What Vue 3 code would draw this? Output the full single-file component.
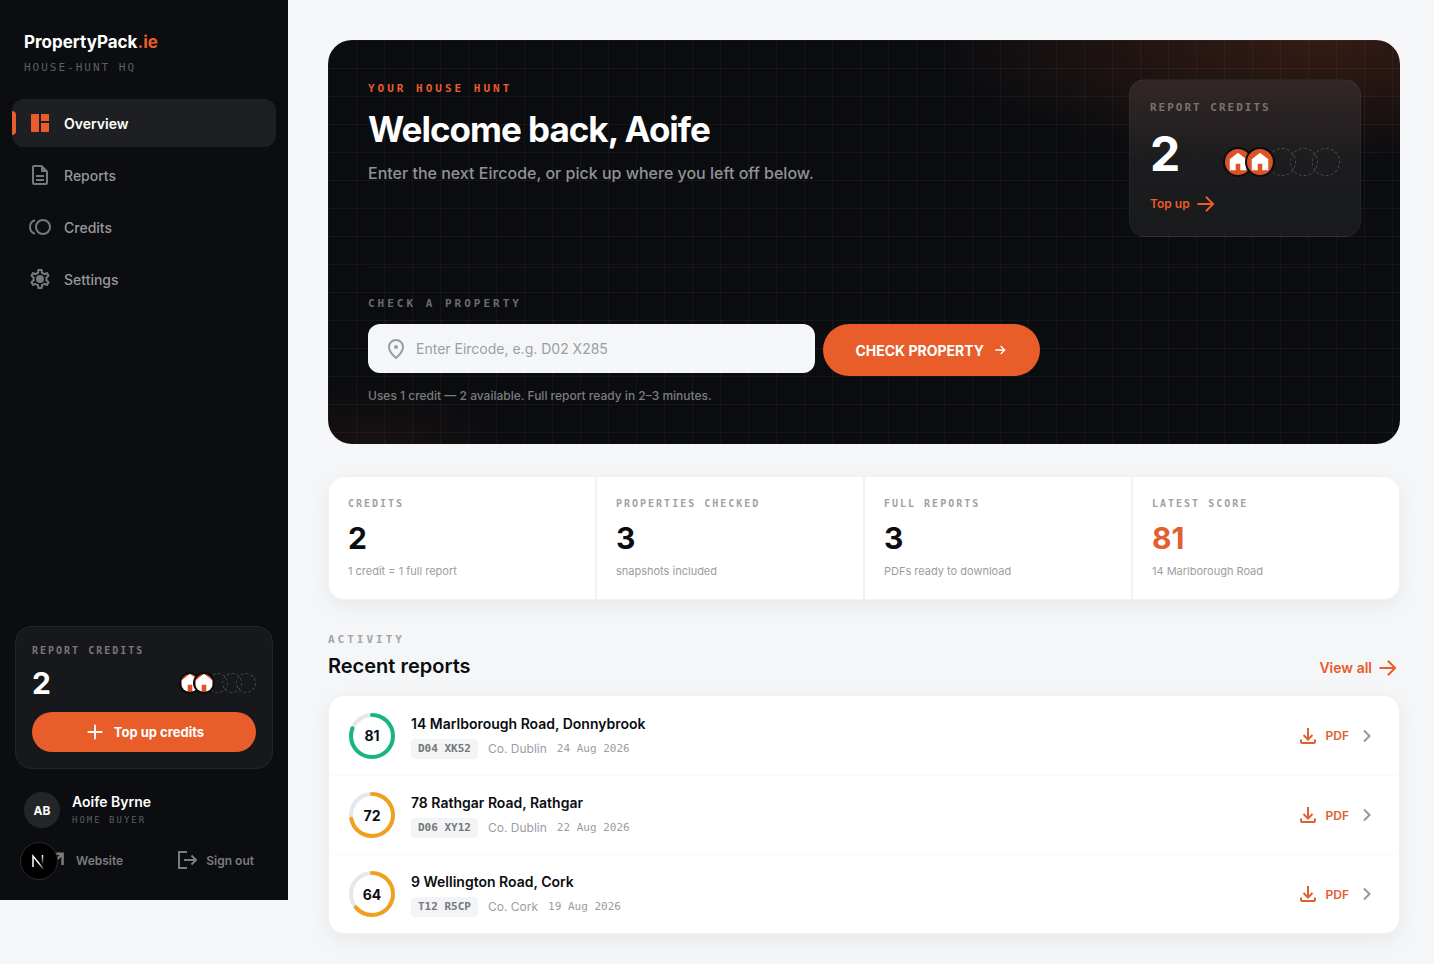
<template>
  <div class="app">
    <aside class="sidebar">
      <a href="#" class="brand">PropertyPack<span>.ie</span></a>
      <p class="mono tagline">HOUSE-HUNT HQ</p>

      <nav class="nav" aria-label="Main">
        <a v-for="item in nav" :key="item.label" href="#" class="nav-item" :class="{ active: item.active }">
          <svg viewBox="0 0 24 24" width="24" height="24" aria-hidden="true"><path :d="item.icon" /></svg>
          {{ item.label }}
        </a>
      </nav>

      <section class="side-card">
        <p class="mono side-label">REPORT CREDITS</p>
        <div class="credit-row">
          <strong class="side-count">{{ credits }}</strong>
          <div class="tokens small">
            <span v-for="n in 5" :key="n" class="token" :class="{ full: n <= credits }">
              <svg v-if="n <= credits" viewBox="0 0 24 24" aria-hidden="true"><path :d="house" /></svg>
            </span>
          </div>
        </div>
        <button type="button" class="topup-btn">
          <svg viewBox="0 0 24 24" width="22" height="22" aria-hidden="true"><path d="M11 4h2v7h7v2h-7v7h-2v-7H4v-2h7z" /></svg>
          Top up credits
        </button>
      </section>

      <div class="user">
        <span class="avatar">AB</span>
        <div>
          <p class="user-name">Aoife Byrne</p>
          <p class="mono user-role">HOME BUYER</p>
        </div>
      </div>

      <div class="side-links">
        <a href="#" class="side-link">
          <svg viewBox="0 0 24 24" width="20" height="20" aria-hidden="true"><path d="M4 3h15v15h-3V8.100L5.500 18.600l-2.100-2.100L13.900 6H4z" /></svg>
          Website
        </a>
        <a href="#" class="side-link">
          <svg viewBox="0 0 24 24" width="24" height="24" aria-hidden="true">
            <path d="M13 4H5v16h8M10 12h12M17.500 7.500L22 12l-4.500 4.500" class="line" />
          </svg>
          Sign out
        </a>
      </div>

      <button type="button" class="dev-badge" aria-label="Open dev tools">
        <svg viewBox="0 0 36 36" width="36" height="36" aria-hidden="true">
          <defs>
            <linearGradient id="fade-diag" x1="18" y1="20" x2="23" y2="27" gradientUnits="userSpaceOnUse">
              <stop stop-color="#fff" /><stop offset="1" stop-color="#fff" stop-opacity="0" />
            </linearGradient>
            <linearGradient id="fade-stem" x1="21" y1="12" x2="21" y2="22" gradientUnits="userSpaceOnUse">
              <stop stop-color="#fff" /><stop offset="1" stop-color="#fff" stop-opacity="0" />
            </linearGradient>
          </defs>
          <path d="M12 24V13L22.500 26" fill="none" stroke="url(#fade-diag)" stroke-width="1.500" />
          <path d="M21.500 12v9" fill="none" stroke="url(#fade-stem)" stroke-width="1.500" />
        </svg>
      </button>
    </aside>

    <main class="main">
      <section class="hero">
        <div class="hero-top">
          <div>
            <p class="mono eyebrow">YOUR HOUSE HUNT</p>
            <h1>Welcome back, Aoife</h1>
            <p class="lead">Enter the next Eircode, or pick up where you left off below.</p>
          </div>
          <div class="hero-card">
            <p class="mono hero-label">REPORT CREDITS</p>
            <div class="credit-row">
              <strong class="hero-count">{{ credits }}</strong>
              <div class="tokens">
                <span v-for="n in 5" :key="n" class="token" :class="{ full: n <= credits }">
                  <svg v-if="n <= credits" viewBox="0 0 24 24" aria-hidden="true"><path :d="house" /></svg>
                </span>
              </div>
            </div>
            <a href="#" class="arrow-link">
              Top up
              <svg viewBox="0 0 24 24" width="24" height="24" aria-hidden="true"><path :d="arrow" /></svg>
            </a>
          </div>
        </div>

        <form class="check" @submit.prevent>
          <label class="mono check-label" for="eircode">CHECK A PROPERTY</label>
          <div class="check-row">
            <div class="field">
              <svg viewBox="0 0 24 24" width="24" height="24" aria-hidden="true">
                <path d="M12 21C8 17.500 5 14 5 10a7 7 0 0 1 14 0c0 4-3 7.500-7 11z" />
                <circle cx="12" cy="10" r="2" />
              </svg>
              <input id="eircode" v-model="eircode" type="text" placeholder="Enter Eircode, e.g. D02 X285" />
            </div>
            <button type="submit" class="check-btn">
              CHECK PROPERTY
              <svg viewBox="0 0 24 24" width="16" height="16" aria-hidden="true">
                <path d="M5 12h14M13 6l6 6-6 6" />
              </svg>
            </button>
          </div>
          <p class="hint">Uses 1 credit — {{ credits }} available. Full report ready in 2–3 minutes.</p>
        </form>
      </section>

      <section class="stats">
        <div v-for="stat in stats" :key="stat.label" class="stat">
          <p class="mono stat-label">{{ stat.label }}</p>
          <p class="stat-value" :class="{ accent: stat.accent }">{{ stat.value }}</p>
          <p class="stat-note">{{ stat.note }}</p>
        </div>
      </section>

      <header class="section-head">
        <div>
          <p class="mono activity">ACTIVITY</p>
          <h2>Recent reports</h2>
        </div>
        <a href="#" class="arrow-link view-all">
          View all
          <svg viewBox="0 0 24 24" width="24" height="24" aria-hidden="true"><path :d="arrow" /></svg>
        </a>
      </header>

      <ul class="reports">
        <li v-for="report in reports" :key="report.code" class="report">
          <div class="ring">
            <svg viewBox="0 0 48 48" width="48" height="48" aria-hidden="true">
              <circle cx="24" cy="24" r="21" stroke="#e6e7e8" />
              <circle
                cx="24" cy="24" r="21" pathLength="100" stroke-linecap="round"
                transform="rotate(-90 24 24)" :stroke="report.score >= 80 ? '#16b67d' : '#f0a01c'"
                :stroke-dasharray="`${report.score} 100`"
              />
            </svg>
            <span>{{ report.score }}</span>
          </div>
          <div class="report-body">
            <h3>{{ report.address }}</h3>
            <div class="meta">
              <span class="mono code">{{ report.code }}</span>
              <span class="county">{{ report.county }}</span>
              <span class="mono date">{{ report.date }}</span>
            </div>
          </div>
          <a href="#" class="pdf">
            <svg viewBox="0 0 24 24" width="24" height="24" aria-hidden="true">
              <path d="M12 4v11M7.500 11l4.500 4.500 4.500-4.500M5 15.500v2.500a1 1 0 0 0 1 1h12a1 1 0 0 0 1-1v-2.500" />
            </svg>
            PDF
          </a>
          <svg class="chevron" viewBox="0 0 24 24" width="24" height="24" aria-hidden="true"><path d="M9 6.500l5.500 5.500L9 17.500" /></svg>
        </li>
      </ul>
    </main>
  </div>
</template>

<script setup>
import { ref } from 'vue'

const credits = 2
const eircode = ref('')

const house = 'M12 2L3 9V21H9.500V14h5V21H21V9z'
const arrow = 'M3.500 11h13.200l-5.500-5.500 1.400-1.400L20.500 12l-7.900 7.900-1.400-1.400 5.500-5.500H3.500z'

const nav = [
  {
    label: 'Overview',
    active: true,
    icon: 'M4 3h7v18H4a1 1 0 0 1-1-1V4a1 1 0 0 1 1-1zM13 3h7a1 1 0 0 1 1 1v6h-8zM13 12h8v8a1 1 0 0 1-1 1h-7z',
  },
  {
    label: 'Reports',
    icon: 'M8 16h8v2H8zM8 12h8v2H8zM14 2H6a2 2 0 0 0-2 2v16a2 2 0 0 0 2 2h12a2 2 0 0 0 2-2V8zM18 20H6V4h7v5h5z',
  },
  {
    label: 'Credits',
    icon: 'M15 4a8 8 0 1 0 0 16 8 8 0 0 0 0-16zm0 14a6 6 0 1 1 0-12 6 6 0 0 1 0 12zM3 12a6 6 0 0 1 4-5.650V4.260a8 8 0 0 0 0 15.480v-2.090A6 6 0 0 1 3 12z',
  },
  {
    label: 'Settings',
    icon: 'M19.430 12.980c.04-.32.07-.64.07-.98 0-.34-.03-.66-.07-.98l2.110-1.650c.19-.15.24-.42.12-.64l-2-3.460c-.09-.16-.26-.25-.44-.25-.06 0-.12.01-.17.03l-2.490 1c-.52-.4-1.080-.73-1.690-.98l-.38-2.650C14.460 2.180 14.250 2 14 2h-4c-.25 0-.46.18-.49.42l-.38 2.650c-.61.25-1.170.59-1.690.98l-2.490-1c-.06-.02-.12-.03-.18-.03-.17 0-.34.09-.43.25l-2 3.460c-.13.22-.07.49.12.64l2.110 1.650c-.04.32-.07.65-.07.98 0 .33.03.66.07.98l-2.110 1.650c-.19.15-.24.42-.12.64l2 3.460c.09.16.26.25.44.25.06 0 .12-.01.17-.03l2.490-1c.52.4 1.080.73 1.690.98l.38 2.650c.03.24.24.42.49.42h4c.25 0 .46-.18.49-.42l.38-2.650c.61-.25 1.170-.59 1.690-.98l2.490 1c.06.02.12.03.18.03.17 0 .34-.09.43-.25l2-3.460c.12-.22.07-.49-.12-.64l-2.110-1.650zm-1.980-1.710c.04.31.05.52.05.73 0 .21-.02.43-.05.73l-.14 1.130.89.7 1.080.84-.7 1.210-1.270-.51-1.040-.42-.9.680c-.43.32-.84.56-1.250.73l-1.060.43-.16 1.130-.2 1.350h-1.400l-.19-1.350-.16-1.130-1.060-.43c-.43-.18-.83-.41-1.230-.71l-.91-.7-1.060.43-1.270.51-.7-1.210 1.080-.84.89-.7-.14-1.130c-.03-.31-.05-.54-.05-.74s.02-.43.05-.73l.14-1.130-.89-.7-1.080-.84.7-1.210 1.270.51 1.040.42.9-.68c.43-.32.84-.56 1.250-.73l1.060-.43.16-1.130.2-1.350h1.390l.19 1.350.16 1.130 1.060.43c.43.18.83.41 1.230.71l.91.7 1.060-.43 1.270-.51.7 1.210-1.070.85-.89.7.14 1.130zM12 8a4 4 0 1 0 0 8 4 4 0 0 0 0-8z',
  },
]

const stats = [
  { label: 'CREDITS', value: 2, note: '1 credit = 1 full report' },
  { label: 'PROPERTIES CHECKED', value: 3, note: 'snapshots included' },
  { label: 'FULL REPORTS', value: 3, note: 'PDFs ready to download' },
  { label: 'LATEST SCORE', value: 81, note: '14 Marlborough Road', accent: true },
]

const reports = [
  { score: 81, address: '14 Marlborough Road, Donnybrook', code: 'D04 XK52', county: 'Co. Dublin', date: '24 Aug 2026' },
  { score: 72, address: '78 Rathgar Road, Rathgar', code: 'D06 XY12', county: 'Co. Dublin', date: '22 Aug 2026' },
  { score: 64, address: '9 Wellington Road, Cork', code: 'T12 R5CP', county: 'Co. Cork', date: '19 Aug 2026' },
]
</script>

<style>
body {
  margin: 0;
  background: #f5f6f8;
}
</style>

<style scoped>
.app {
  display: flex;
  align-items: flex-start;
  min-height: 100vh;
  font-family: Inter, "Liberation Sans", sans-serif;
  color: #0b0d10;
}

.app * {
  box-sizing: border-box;
}

p, h1, h2, h3, ul {
  margin: 0;
  padding: 0;
}

a {
  color: inherit;
  text-decoration: none;
}

button, input {
  font-family: inherit;
  border: none;
}

button {
  cursor: pointer;
}

svg {
  display: block;
  flex: none;
  fill: currentColor;
}

.mono {
  font-family: "DejaVu Sans Mono", "Liberation Mono", monospace;
}

/* Sidebar */
.sidebar {
  position: sticky;
  top: 0;
  flex: none;
  display: flex;
  flex-direction: column;
  width: 288px;
  height: calc(100vh - 64px);
  min-height: 640px;
  padding: 30px 12px 24px;
  background: #0b0d10;
  color: #fff;
}

.brand {
  padding: 0 12px;
  font-size: 17px;
  line-height: 24px;
  font-weight: 700;
}

.brand span {
  color: #e85d2a;
}

.tagline {
  padding: 6px 12px 0;
  font-size: 11px;
  line-height: 16px;
  letter-spacing: 2px;
  color: #5d5f62;
}

.nav {
  display: flex;
  flex-direction: column;
  gap: 4px;
  margin-top: 23px;
}

.nav-item {
  display: flex;
  align-items: center;
  gap: 12px;
  position: relative;
  height: 48px;
  padding: 0 16px;
  border-radius: 12px;
  font-size: 14px;
  font-weight: 500;
  color: #97989a;
}

.nav-item svg {
  color: #77787b;
}

.nav-item.active {
  background: #1e1f23;
  color: #fff;
  font-weight: 600;
}

.nav-item.active svg {
  color: #e85d2a;
}

.nav-item.active::before {
  content: "";
  position: absolute;
  left: 0;
  top: 12px;
  width: 4px;
  height: 24px;
  border-radius: 0 4px 4px 0;
  background: #e85d2a;
}

.side-card {
  margin: auto 3px 0;
  padding: 16px;
  border: 1px solid #232427;
  border-radius: 16px;
  background: #17181b;
}

.side-label {
  font-size: 10px;
  line-height: 16px;
  font-weight: 700;
  letter-spacing: 2px;
  color: #77787a;
}

.credit-row {
  display: flex;
  align-items: center;
  justify-content: space-between;
}

.side-count {
  font-size: 30px;
  line-height: 48px;
}

.tokens {
  display: flex;
}

.token {
  width: 28px;
  height: 28px;
  margin-left: -6px;
  border: 1px dashed #4a4b4e;
  border-radius: 50%;
}

.token:first-child {
  margin-left: 0;
}

.token.full {
  position: relative;
  display: flex;
  align-items: center;
  justify-content: center;
  width: 30px;
  height: 30px;
  margin: -1px -1px -1px -7px;
  border: 2px solid #0b0d10;
  background: #dc5426;
  color: #fff;
  overflow: hidden;
}

.token.full svg {
  width: 22px;
  height: 22px;
}

.tokens.small .token {
  width: 20px;
  height: 20px;
}

.tokens.small .token.full {
  width: 22px;
  height: 22px;
}

.topup-btn {
  display: flex;
  align-items: center;
  justify-content: center;
  gap: 8px;
  width: 100%;
  height: 40px;
  margin-top: 5px;
  border-radius: 20px;
  background: #e85d2a;
  color: #fff;
  font-size: 13px;
  font-weight: 700;
}

.user {
  display: flex;
  align-items: center;
  gap: 12px;
  padding: 23px 12px 0;
}

.avatar {
  display: grid;
  place-items: center;
  width: 36px;
  height: 36px;
  border-radius: 50%;
  background: #232527;
  font-size: 12px;
  font-weight: 700;
}

.user-name {
  font-size: 14px;
  line-height: 20px;
  font-weight: 600;
}

.user-role {
  font-size: 9px;
  line-height: 16px;
  letter-spacing: 2px;
  color: #5d5f62;
}

.side-links {
  display: flex;
  justify-content: space-between;
  padding: 20px 22px 4px 36px;
}

.side-link {
  display: flex;
  align-items: center;
  gap: 8px;
  height: 24px;
  font-size: 12px;
  font-weight: 600;
  color: #7b7c7e;
}

.line {
  fill: none;
  stroke: currentColor;
  stroke-width: 2;
}

.dev-badge {
  position: absolute;
  left: 20px;
  bottom: 20px;
  padding: 0;
  border: 1px solid #2b2b2b;
  border-radius: 50%;
  background: #000;
}

/* Main column */
.main {
  flex: 1;
  min-width: 0;
  padding: 40px 34px 32px 40px;
}

.hero {
  padding: 39px 39px 38px 40px;
  border-radius: 24px;
  background:
    linear-gradient(rgba(255, 255, 255, 0.045) 1px, transparent 1px) 0 0 / 28px 28px,
    linear-gradient(90deg, rgba(255, 255, 255, 0.045) 1px, transparent 1px) 0 0 / 28px 28px,
    radial-gradient(ellipse 380px 120px at 92% 0, rgba(232, 93, 42, 0.19), transparent),
    radial-gradient(ellipse 140px 60px at 4% 100%, rgba(232, 93, 42, 0.06), transparent),
    #0b0c0f;
  color: #fff;
}

.hero-top {
  display: flex;
  justify-content: space-between;
  align-items: flex-start;
  gap: 24px;
}

.eyebrow {
  font-size: 11px;
  line-height: 20px;
  font-weight: 700;
  letter-spacing: 3px;
  color: #e85d2a;
}

h1 {
  margin-top: 8px;
  font-size: 35px;
  line-height: 44px;
  font-weight: 700;
  letter-spacing: -1px;
}

.lead {
  margin-top: 9px;
  font-size: 16px;
  line-height: 26px;
  font-weight: 500;
  color: #929395;
}

.hero-card {
  flex: none;
  width: 232px;
  padding: 20px;
  border: 1px solid rgba(255, 255, 255, 0.04);
  border-radius: 16px;
  background: linear-gradient(rgba(52, 41, 40, 0.95), rgba(30, 30, 32, 0.95) 50%, rgba(25, 27, 29, 0.95));
}

.hero-label {
  font-size: 11px;
  line-height: 16px;
  font-weight: 700;
  letter-spacing: 2px;
  color: #77736f;
}

.hero-count {
  font-size: 48px;
  line-height: 76px;
}

.hero-card .tokens {
  margin-top: 16px;
}

.arrow-link {
  display: flex;
  align-items: center;
  gap: 4px;
  font-size: 12px;
  line-height: 24px;
  font-weight: 600;
  color: #e85d2a;
}

.check {
  margin-top: 30px;
  padding-top: 26px;
  border-top: 1px solid rgba(255, 255, 255, 0.04);
}

.check-label {
  display: block;
  font-size: 11px;
  line-height: 20px;
  font-weight: 700;
  letter-spacing: 3px;
  color: #6b6c6e;
}

.check-row {
  display: flex;
  align-items: flex-start;
  gap: 8px;
  max-width: 672px;
  margin-top: 10px;
}

.field {
  flex: 1;
  display: flex;
  align-items: center;
  gap: 8px;
  height: 49px;
  padding: 0 16px;
  border-radius: 12px;
  background: #f5f6f8;
  color: #9a9ca0;
}

.field svg {
  fill: none;
  stroke: currentColor;
  stroke-width: 2;
}

.field circle {
  fill: currentColor;
  stroke: none;
}

.field input {
  flex: 1;
  min-width: 0;
  padding: 0;
  background: transparent;
  font-size: 14px;
  color: #0b0d10;
  outline: none;
}

.field input::placeholder {
  color: #9a9ea5;
}

.check-btn {
  display: flex;
  align-items: center;
  gap: 8px;
  height: 52px;
  padding: 0 32px;
  border-radius: 26px;
  background: #e85d2a;
  color: #fff;
  font-size: 14px;
  font-weight: 700;
  white-space: nowrap;
}

.check-btn svg {
  fill: none;
  stroke: currentColor;
  stroke-width: 2;
}

.hint {
  margin-top: 10px;
  font-size: 12px;
  line-height: 20px;
  font-weight: 500;
  color: #7b7c7e;
}

/* Stats */
.stats {
  display: grid;
  grid-template-columns: repeat(4, 1fr);
  gap: 2px;
  margin-top: 32px;
  border: 1px solid #f1f2f4;
  border-radius: 16px;
  overflow: hidden;
  background: #f1f2f4;
  box-shadow: 0 6px 20px rgba(11, 13, 16, 0.06);
}

.stat {
  padding: 19px;
  background: #fff;
}

.stat-label {
  font-size: 10px;
  line-height: 16px;
  font-weight: 700;
  letter-spacing: 2px;
  color: #9fa1a5;
}

.stat-value {
  margin-top: 7px;
  font-size: 30px;
  line-height: 38px;
  font-weight: 700;
}

.stat-value.accent {
  color: #e0602f;
}

.stat-note {
  margin-top: 5px;
  font-size: 11px;
  line-height: 18px;
  color: #9a9da2;
}

/* Recent reports */
.section-head {
  display: flex;
  justify-content: space-between;
  align-items: flex-end;
  margin-top: 30px;
}

.activity {
  font-size: 11px;
  line-height: 20px;
  font-weight: 700;
  letter-spacing: 3px;
  color: #a2a4a7;
}

h2 {
  margin-top: 2px;
  font-size: 20px;
  line-height: 28px;
  font-weight: 600;
}

.view-all {
  font-size: 14px;
}

.reports {
  margin-top: 15px;
  border: 1px solid #f1f2f4;
  border-radius: 16px;
  background: #fff;
  box-shadow: 0 6px 20px rgba(11, 13, 16, 0.06);
  list-style: none;
}

.report {
  display: flex;
  align-items: center;
  gap: 15px;
  height: 79px;
  padding: 0 20px 0 19px;
}

.report + .report {
  border-top: 1px solid #fafafb;
}

.ring {
  display: grid;
  place-items: center;
}

.ring > * {
  grid-area: 1 / 1;
}

.ring circle {
  fill: none;
  stroke-width: 4;
}

.ring span {
  font-size: 14px;
  font-weight: 700;
}

.report-body {
  flex: 1;
}

h3 {
  font-size: 14px;
  line-height: 22px;
  font-weight: 600;
}

.meta {
  display: flex;
  align-items: center;
  gap: 10px;
  margin-top: 4px;
  line-height: 20px;
}

.code {
  padding: 0 7px;
  border-radius: 4px;
  background: #f2f4f5;
  font-size: 11px;
  font-weight: 700;
  color: #74777b;
}

.county {
  font-size: 12px;
  color: #9a9da2;
}

.date {
  font-size: 11px;
  color: #9a9da2;
}

.pdf {
  display: flex;
  align-items: center;
  gap: 6px;
  font-size: 12px;
  font-weight: 600;
  color: #e0602f;
}

.pdf svg, .chevron {
  fill: none;
  stroke: currentColor;
  stroke-width: 2;
}

.chevron {
  margin-left: -9px;
  color: #95979b;
}
</style>
